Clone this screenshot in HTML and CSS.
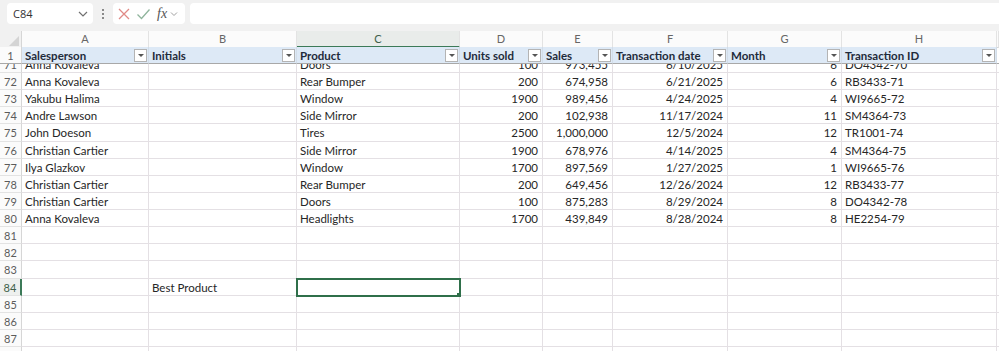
FILE: index.html
```html
<!DOCTYPE html>
<html>
<head>
<meta charset="utf-8">
<link rel="stylesheet" href="styles.css">
</head>
<body>
<div class="toolbar">
  <div class="namebox">
    <span>C84</span>
    <svg class="chev" width="10" height="6" viewBox="0 0 10 6"><path d="M1 1l4 4 4-4" fill="none" stroke="#707070" stroke-width="1.2"/></svg>
  </div>
  <div class="kebab"><i></i><i></i><i></i></div>
  <div class="fnbox">
    <svg width="14" height="14" viewBox="0 0 14 14"><path d="M2 2l10 10M12 2L2 12" stroke="#e08a86" stroke-width="1.3" fill="none"/></svg>
    <svg width="15" height="14" viewBox="0 0 15 14"><path d="M1.5 7.5l4 4L13.5 2.5" stroke="#8fb49c" stroke-width="1.3" fill="none"/></svg>
    <span class="fx">fx</span>
    <svg class="chev2" width="8" height="6" viewBox="0 0 8 6"><path d="M1 1.5l3 3 3-3" fill="none" stroke="#a0a0a0" stroke-width="1"/></svg>
  </div>
  <div class="formula"></div>
</div>
<div class="sheet">
  <div class="row colhead">
    <div class="corner"><svg width="10" height="10" viewBox="0 0 10 10"><path d="M10 0V10H0Z" fill="#d4d4d4"/></svg></div>
    <div class="ch">A</div><div class="ch">B</div><div class="ch sel">C</div><div class="ch">D</div><div class="ch">E</div><div class="ch">F</div><div class="ch">G</div><div class="ch">H</div><div class="ch"></div>
  </div>
  <div class="row thead">
    <div class="rh">1</div>
    <div class="c th">Salesperson<span class="fb"></span></div>
    <div class="c th">Initials<span class="fb"></span></div>
    <div class="c th">Product<span class="fb"></span></div>
    <div class="c th">Units sold<span class="fb"></span></div>
    <div class="c th">Sales<span class="fb"></span></div>
    <div class="c th">Transaction date<span class="fb"></span></div>
    <div class="c th">Month<span class="fb"></span></div>
    <div class="c th">Transaction ID<span class="fb"></span></div>
    <div class="c"></div>
  </div>
  <div class="body">
    <div class="row first"><div class="rh"><span>71</span></div><div class="c"><span>Anna Kovaleva</span></div><div class="c"></div><div class="c"><span>Doors</span></div><div class="c n"><span>100</span></div><div class="c n"><span>973,455</span></div><div class="c n"><span>6/10/2025</span></div><div class="c n"><span>6</span></div><div class="c"><span>DO4342-70</span></div><div class="c"></div></div>
    <div class="row"><div class="rh">72</div><div class="c">Anna Kovaleva</div><div class="c"></div><div class="c">Rear Bumper</div><div class="c n">200</div><div class="c n">674,958</div><div class="c n">6/21/2025</div><div class="c n">6</div><div class="c">RB3433-71</div><div class="c"></div></div>
    <div class="row"><div class="rh">73</div><div class="c">Yakubu Halima</div><div class="c"></div><div class="c">Window</div><div class="c n">1900</div><div class="c n">989,456</div><div class="c n">4/24/2025</div><div class="c n">4</div><div class="c">WI9665-72</div><div class="c"></div></div>
    <div class="row"><div class="rh">74</div><div class="c">Andre Lawson</div><div class="c"></div><div class="c">Side Mirror</div><div class="c n">200</div><div class="c n">102,938</div><div class="c n">11/17/2024</div><div class="c n">11</div><div class="c">SM4364-73</div><div class="c"></div></div>
    <div class="row"><div class="rh">75</div><div class="c">John Doeson</div><div class="c"></div><div class="c">Tires</div><div class="c n">2500</div><div class="c n">1,000,000</div><div class="c n">12/5/2024</div><div class="c n">12</div><div class="c">TR1001-74</div><div class="c"></div></div>
    <div class="row"><div class="rh">76</div><div class="c">Christian Cartier</div><div class="c"></div><div class="c">Side Mirror</div><div class="c n">1900</div><div class="c n">678,976</div><div class="c n">4/14/2025</div><div class="c n">4</div><div class="c">SM4364-75</div><div class="c"></div></div>
    <div class="row"><div class="rh">77</div><div class="c">Ilya Glazkov</div><div class="c"></div><div class="c">Window</div><div class="c n">1700</div><div class="c n">897,569</div><div class="c n">1/27/2025</div><div class="c n">1</div><div class="c">WI9665-76</div><div class="c"></div></div>
    <div class="row"><div class="rh">78</div><div class="c">Christian Cartier</div><div class="c"></div><div class="c">Rear Bumper</div><div class="c n">200</div><div class="c n">649,456</div><div class="c n">12/26/2024</div><div class="c n">12</div><div class="c">RB3433-77</div><div class="c"></div></div>
    <div class="row"><div class="rh">79</div><div class="c">Christian Cartier</div><div class="c"></div><div class="c">Doors</div><div class="c n">100</div><div class="c n">875,283</div><div class="c n">8/29/2024</div><div class="c n">8</div><div class="c">DO4342-78</div><div class="c"></div></div>
    <div class="row"><div class="rh">80</div><div class="c">Anna Kovaleva</div><div class="c"></div><div class="c">Headlights</div><div class="c n">1700</div><div class="c n">439,849</div><div class="c n">8/28/2024</div><div class="c n">8</div><div class="c">HE2254-79</div><div class="c"></div></div>
    <div class="row"><div class="rh">81</div><div class="c"></div><div class="c"></div><div class="c"></div><div class="c"></div><div class="c"></div><div class="c"></div><div class="c"></div><div class="c"></div><div class="c"></div></div>
    <div class="row"><div class="rh">82</div><div class="c"></div><div class="c"></div><div class="c"></div><div class="c"></div><div class="c"></div><div class="c"></div><div class="c"></div><div class="c"></div><div class="c"></div></div>
    <div class="row"><div class="rh">83</div><div class="c"></div><div class="c"></div><div class="c"></div><div class="c"></div><div class="c"></div><div class="c"></div><div class="c"></div><div class="c"></div><div class="c"></div></div>
    <div class="row"><div class="rh active">84</div><div class="c"></div><div class="c">Best Product</div><div class="c selected"></div><div class="c"></div><div class="c"></div><div class="c"></div><div class="c"></div><div class="c"></div><div class="c"></div></div>
    <div class="row"><div class="rh">85</div><div class="c"></div><div class="c"></div><div class="c"></div><div class="c"></div><div class="c"></div><div class="c"></div><div class="c"></div><div class="c"></div><div class="c"></div></div>
    <div class="row"><div class="rh">86</div><div class="c"></div><div class="c"></div><div class="c"></div><div class="c"></div><div class="c"></div><div class="c"></div><div class="c"></div><div class="c"></div><div class="c"></div></div>
    <div class="row"><div class="rh">87</div><div class="c"></div><div class="c"></div><div class="c"></div><div class="c"></div><div class="c"></div><div class="c"></div><div class="c"></div><div class="c"></div><div class="c"></div></div>
    <div class="row"><div class="rh">88</div><div class="c"></div><div class="c"></div><div class="c"></div><div class="c"></div><div class="c"></div><div class="c"></div><div class="c"></div><div class="c"></div><div class="c"></div></div>
  </div>
</div>
</body>
</html>
```
FILE: styles.css
```css
* { box-sizing: border-box; }
html, body { margin: 0; padding: 0; background: #fff; }
body {
  width: 999px;
  height: 351px;
  overflow: hidden;
  font-family: Lato, "Open Sans", sans-serif;
  font-size: 11.5px;
  color: #262626;
}
.toolbar {
  height: 31px;
  background: #f1f1f1;
  display: flex;
  align-items: flex-start;
  padding: 3px 0 0 7px;
}
.namebox {
  width: 86px;
  height: 21px;
  background: #fff;
  border-radius: 4px;
  display: flex;
  align-items: center;
  justify-content: space-between;
  padding: 0 5px 0 6px;
  font-family: "Open Sans", sans-serif;
  font-size: 11px;
  color: #333;
}
.kebab {
  width: 20px;
  height: 21px;
  display: flex;
  flex-direction: column;
  align-items: center;
  justify-content: center;
  gap: 2px;
}
.kebab i { width: 2px; height: 2px; background: #666; border-radius: 1px; display: block; }
.fnbox {
  width: 72px;
  height: 21px;
  background: #fff;
  border-radius: 4px;
  display: flex;
  align-items: center;
  padding: 0 3px 0 4px;
  gap: 5px;
}
.fx {
  font-family: "Liberation Serif", serif;
  font-style: italic;
  font-size: 14px;
  color: #555;
  margin-left: 1px;
}
.chev2 { margin-left: -2px; }
.formula {
  flex: 1;
  height: 21px;
  background: #fff;
  border-radius: 4px 0 0 4px;
  margin-left: 5px;
}
.row {
  display: grid;
  grid-template-columns: 22px 127px 148px 163px 83px 70px 115px 114px 155px 1fr;
  height: 17.13px;
}
.colhead { height: 16px; background: #fbfbfb; }
.corner {
  background: #f1f1f1;
  display: flex;
  align-items: flex-end;
  justify-content: flex-end;
  padding: 0 2px 2px 0;
  border-right: 1px solid #d6d6d6;
}
.ch {
  font-size: 11px;
  color: #666;
  text-align: center;
  line-height: 15px;
  border-right: 1px solid #e3e3e3;
  border-bottom: 1px solid #d6d6d6;
}
.ch.sel {
  background: #e9ecea;
  border-bottom: 2px solid #3c7a58;
  color: #3f5f4a;
}
.rh {
  font-size: 11px;
  color: #5b5b5b;
  text-align: center;
  padding-top: 1px;
  line-height: 16px;
  background: #fbfbfb;
  border-right: 1px solid #d6d6d6;
  border-bottom: 1px solid #e3e3e3;
  overflow: hidden;
}
.rh.active {
  border-right: 2px solid #3c7a58;
  color: #3f5f4a;
  background: #eef0ee;
}
.c {
  border-right: 1px solid #e4e0e4;
  border-bottom: 1px solid #e4e0e4;
  padding: 1px 3px 0;
  line-height: 16px;
  white-space: nowrap;
  overflow: hidden;
}
.n { text-align: right; padding-right: 4px; }
.thead { height: 17px; }
.thead .rh { background: #fbfbfb; border-bottom: 1px solid #a8a8a8; }
.thead .c { border-bottom: 1px solid #a8a8a8; }
.th {
  background: #dde9f6;
  font-weight: bold;
  color: #1f2b3b;
  display: flex;
  align-items: center;
  justify-content: space-between;
  padding: 1px 1px 0 3px;
  border-right-color: #d3dde8 !important;
}
.fb {
  width: 13px;
  height: 13px;
  margin-top: -1px;
  background: #fff;
  border: 1px solid #b4b4b4;
  position: relative;
  flex: none;
}
.fb::after {
  content: "";
  position: absolute;
  left: 3px;
  top: 4px;
  border-left: 3px solid transparent;
  border-right: 3px solid transparent;
  border-top: 3px solid #555;
}
.body {
  height: 287px;
  overflow: hidden;
}
.row.first { height: 9px; }
.first .c, .first .rh { padding-top: 0; }
.first span { display: block; margin-top: -7px; }
.selected {
  position: relative;
  outline: 2px solid #2f6f4a;
  outline-offset: -1px;
}
.selected::after {
  content: "";
  position: absolute;
  right: -3px;
  bottom: -3px;
  width: 4px;
  height: 4px;
  background: #2f6f4a;
  border: 1px solid #fff;
}
```
